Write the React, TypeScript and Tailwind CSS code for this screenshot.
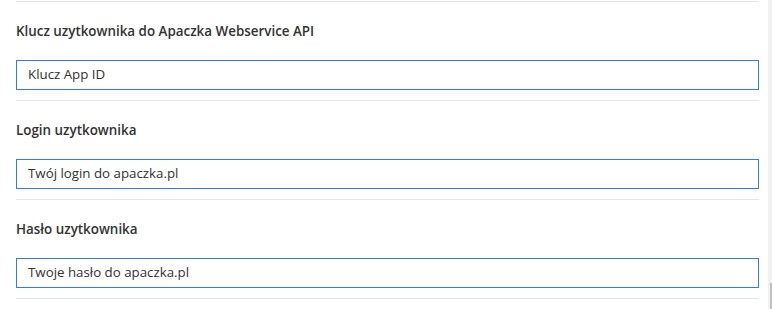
import React from "react";

const fields = [
  { label: "Klucz uzytkownika do Apaczka Webservice API", placeholder: "Klucz App ID" },
  { label: "Login uzytkownika", placeholder: "Twój login do apaczka.pl" },
  { label: "Hasło uzytkownika", placeholder: "Twoje hasło do apaczka.pl" },
];

export default function App() {
  return (
    <div
      className="flex w-[772px] h-[309px] bg-white overflow-hidden"
      style={{ fontFamily: '"Open Sans", "Noto Sans", sans-serif' }}
    >
      <div className="w-[768px] pl-4 pr-[9px]">
        <div className="mt-px h-px bg-[#e6e6e6]" />
        {fields.map((f) => (
          <div key={f.label} className="flex flex-col border-b border-[#e6e6e6] pt-[20px] pb-[10px]">
            <div className="h-[18px] text-[13.4px] leading-[18px] font-semibold text-[#333]">
              {f.label}
            </div>
            <div className="mt-5 h-[30px] border border-[#2f7bf5] flex items-center pl-[11px] text-[13.3px] text-[#333]">
              {f.placeholder}
            </div>
          </div>
        ))}
      </div>
      <div className="w-[4px] bg-[#f1f1f1] flex flex-col justify-end">
        <div className="h-[26px] ml-[2px] w-[2px] bg-[#c1c1c1]" />
      </div>
    </div>
  );
}
